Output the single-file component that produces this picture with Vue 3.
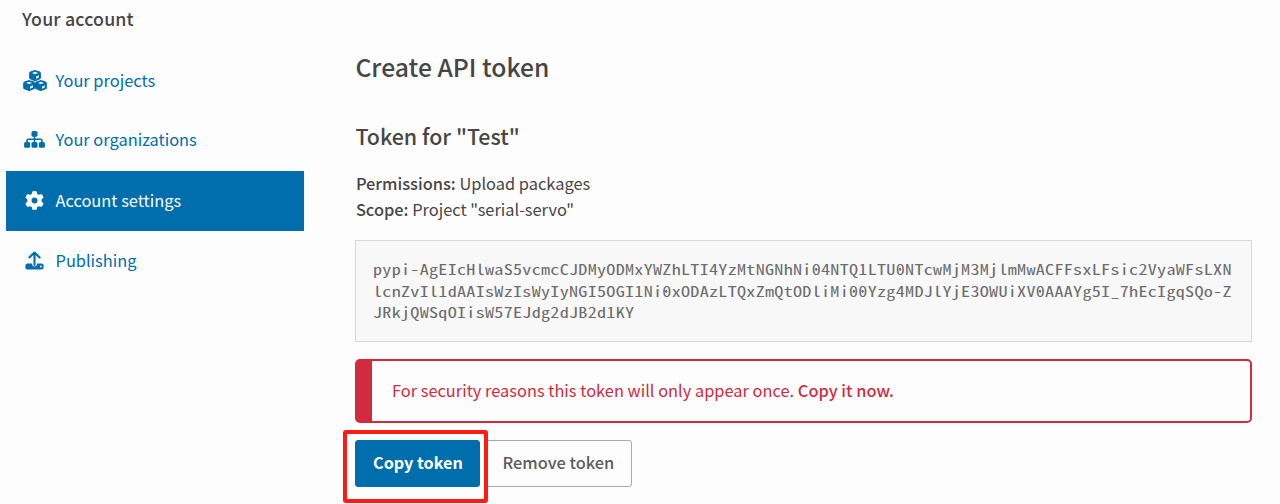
<script setup>
const nav = [
  { id: 'projects', label: 'Your projects' },
  { id: 'orgs', label: 'Your organizations' },
  { id: 'settings', label: 'Account settings', active: true },
  { id: 'publishing', label: 'Publishing' },
]
const cubes = [[288, 126], [146, 365], [430, 365]]
const tokenLines = [
  'pypi-AgEIcHlwaS5vcmcCJDMyODMxYWZhLTI4YzMtNGNhNi04NTQ1LTU0NTcwMjM3MjlmMwACFFsxLFsic2VyaWFsLXN',
  'lcnZvIl1dAAIsWzIsWyIyNGI5OGI1Ni0xODAzLTQxZmQtODliMi00Yzg4MDJlYjE3OWUiXV0AAAYg5I_7hEcIgqSQo-Z',
  'JRkjQWSqOIisW57EJdg2dJB2d1KY',
].map((line) => line.split(/(0)/).filter(Boolean))
</script>

<template>
  <div class="page">
    <aside class="side">
      <h3 class="side-title">Your account</h3>
      <nav>
        <a v-for="n in nav" :key="n.id" class="item" :class="[n.id, { active: n.active }]">
          <span class="icon">
            <svg v-if="n.id === 'projects'" width="24" height="21" viewBox="0 0 576 504">
              <g v-for="(c, i) in cubes" :key="i" :transform="`translate(${c[0]} ${c[1]})`">
                <path d="M-20-122Q0-130 20-122L114-88Q142-77 142-48V60Q142 84 116 96L24 135Q0 144-24 135L-116 96Q-142 84-142 60V-48Q-142-77-114-88Z" fill="currentColor" />
                <path d="M0-82L72-55L0-27L-72-55Z" fill="#fdfdfd" />
                <path d="M26 28L92 2V54L26 82Z" fill="#fdfdfd" />
              </g>
            </svg>
            <svg v-else-if="n.id === 'orgs'" width="21" height="17" viewBox="0 0 21 17">
              <g fill="currentColor">
                <rect x="7.5" y="0" width="6" height="5.7" rx="1.5" />
                <rect x="0.1" y="11.1" width="6" height="5.7" rx="1.5" />
                <rect x="7.5" y="11.1" width="6" height="5.7" rx="1.5" />
                <rect x="14.9" y="11.1" width="6" height="5.7" rx="1.5" />
              </g>
              <path d="M10.5 4V12M3.1 12V9.3Q3.1 8.3 4.1 8.3H16.9Q17.9 8.3 17.9 9.3V12" fill="none" stroke="currentColor" stroke-width="1.6" />
            </svg>
            <svg v-else-if="n.id === 'settings'" width="19" height="19" viewBox="0 0 512 512">
              <path fill="currentColor" d="M495.9 166.6c3.2 8.7 .5 18.4-6.4 24.6l-43.3 39.4c1.1 8.3 1.7 16.8 1.7 25.4s-.6 17.1-1.7 25.4l43.3 39.4c6.9 6.2 9.6 15.9 6.4 24.6c-4.4 11.9-9.7 23.3-15.8 34.3l-4.7 8.1c-6.6 11-14 21.4-22.1 31.2c-5.9 7.2-15.7 9.6-24.5 6.8l-55.7-17.7c-13.4 10.3-28.2 18.9-44 25.4l-12.5 57.1c-2 9.1-9 16.3-18.2 17.8c-13.8 2.3-28 3.5-42.5 3.5s-28.7-1.2-42.5-3.5c-9.2-1.5-16.2-8.7-18.2-17.8l-12.5-57.1c-15.8-6.5-30.6-15.1-44-25.4L83.1 425.9c-8.8 2.8-18.6 .3-24.5-6.8c-8.1-9.8-15.5-20.2-22.1-31.2l-4.7-8.1c-6.1-11-11.4-22.4-15.8-34.3c-3.2-8.7-.5-18.4 6.4-24.6l43.3-39.4C64.6 273.1 64 264.6 64 256s.6-17.1 1.7-25.4L22.4 191.2c-6.9-6.2-9.6-15.9-6.4-24.6c4.4-11.9 9.7-23.3 15.8-34.3l4.7-8.1c6.6-11 14-21.4 22.1-31.2c5.9-7.2 15.7-9.6 24.5-6.8l55.7 17.7c13.4-10.3 28.2-18.9 44-25.4l12.5-57.1c2-9.1 9-16.3 18.2-17.8C227.3 1.2 241.5 0 256 0s28.7 1.2 42.5 3.5c9.2 1.5 16.2 8.7 18.2 17.8l12.5 57.1c15.8 6.5 30.6 15.1 44 25.4l55.7-17.7c8.8-2.8 18.6-.3 24.5 6.8c8.1 9.8 15.5 20.2 22.1 31.2l4.7 8.1c6.1 11 11.4 22.4 15.8 34.3zM256 336a80 80 0 1 0 0-160 80 80 0 1 0 0 160z" />
            </svg>
            <svg v-else width="19" height="19" viewBox="0 0 19 19">
              <path d="M9.5 14V2M4.4 6.4L9.5 1.5L14.6 6.4" fill="none" stroke="currentColor" stroke-width="2.1" stroke-linecap="round" stroke-linejoin="round" />
              <path d="M2.4 12.6H7.1V13.2A2.4 2.4 0 0 0 11.9 13.2V12.6H16.6Q18.6 12.6 18.6 14.6V16.4Q18.6 18.4 16.6 18.4H2.4Q.4 18.4 .4 16.4V14.6Q.4 12.6 2.4 12.6Z" fill="currentColor" />
              <circle cx="15.9" cy="15.5" r=".9" fill="#fdfdfd" />
            </svg>
          </span>
          <span class="label">{{ n.label }}</span>
        </a>
      </nav>
    </aside>
    <main class="main">
      <h1>Create API token</h1>
      <h2>Token for "Test"</h2>
      <p class="meta"><b>Permissions:</b> Upload packages</p>
      <p class="meta"><b>Scope:</b> Project "serial-servo"</p>
      <div class="token">
        <div v-for="(parts, i) in tokenLines" :key="i" class="line"><span v-for="(p, j) in parts" :key="j" :class="{ zero: p === '0' }">{{ p }}</span></div>
      </div>
      <div class="alert"><p>For security reasons this token will only appear once. <b>Copy it now.</b></p></div>
      <div class="buttons">
        <button class="btn primary">Copy token</button>
        <button class="btn">Remove token</button>
        <i class="highlight"></i>
      </div>
    </main>
  </div>
</template>

<style>
body { background: #fdfdfd; overflow: hidden; }
</style>

<style scoped>
.page {
  display: flex; width: 1280px; height: 504px; overflow: hidden; box-sizing: border-box;
  font-family: "Noto Sans CJK SC", "Noto Sans", sans-serif; color: #464646; font-size: 16.4px;
}
h1, h2, h3, p { margin: 0; font-weight: 500; white-space: nowrap; }
p { font-weight: 400; }
b { font-weight: 500; }
.side { width: 298px; margin-left: 6px; flex: none; }
.side-title { font-size: 17.8px; letter-spacing: .15px; line-height: 30px; height: 51px; padding: 3px 0 0 16px; box-sizing: border-box; }
.item { display: flex; align-items: center; height: 60px; color: #006dad; box-sizing: border-box; padding-bottom: 2px; }
.item.orgs { padding-bottom: 4px; }
.item.active { background: #006dad; color: #fff; }
.icon { width: 25px; margin: 0 8.5px 0 16px; display: flex; justify-content: center; }
.main { width: 897px; margin-left: 51.4px; flex: none; }
h1 { font-size: 24.7px; line-height: 36px; padding: 48px 0 0; }
h2 { font-size: 21.4px; line-height: 32px; padding: 36px 0 0; }
.meta { line-height: 26px; padding-left: .5px; }
h2 + .meta { margin-top: 18px; }
.token {
  box-sizing: border-box; height: 102px; margin-top: 18px; padding: 17px 16.6px; border: 1px solid #d8d8d8;
  background: #f8f8f8; color: #6c6c6c; font: 14.5px/21.7px "Noto Sans Mono CJK SC", "DejaVu Sans Mono", monospace;
  white-space: nowrap;
}
.line {
  width: max-content; letter-spacing: .217px;
  transform: scaleX(1.25); transform-origin: 0 0;
}
/* dotted zero */
.zero { background: radial-gradient(ellipse .9px 1.3px at 3.65px 54%, #6c6c6c 80%, transparent 130%); }
.alert {
  box-sizing: border-box; height: 64px; margin-top: 17px; border: 2px solid #d22b40; border-left-width: 17px;
  border-radius: 5px; padding: 0 0 2px 19.6px; color: #d22b40; display: flex; align-items: center;
}
.buttons { position: relative; display: flex; gap: 4px; margin-top: 17px; }
.btn {
  box-sizing: border-box; height: 47px; width: 148px; padding: 0 0 3px; border: 1px solid #aaa; border-radius: 3px;
  background: #fdfdfd; color: #5c5c5c; font: 500 16.4px "Noto Sans CJK SC", sans-serif; white-space: nowrap;
}
.btn.primary { width: 125px; background: #006dad; border-color: #006dad; color: #fff; font-weight: 700; font-size: 16.2px; }
.highlight {
  position: absolute; left: -12px; top: -10px; width: 145px; height: 73px; box-sizing: border-box;
  border: 4px solid #ff1b12; border-radius: 3px;
}
</style>
